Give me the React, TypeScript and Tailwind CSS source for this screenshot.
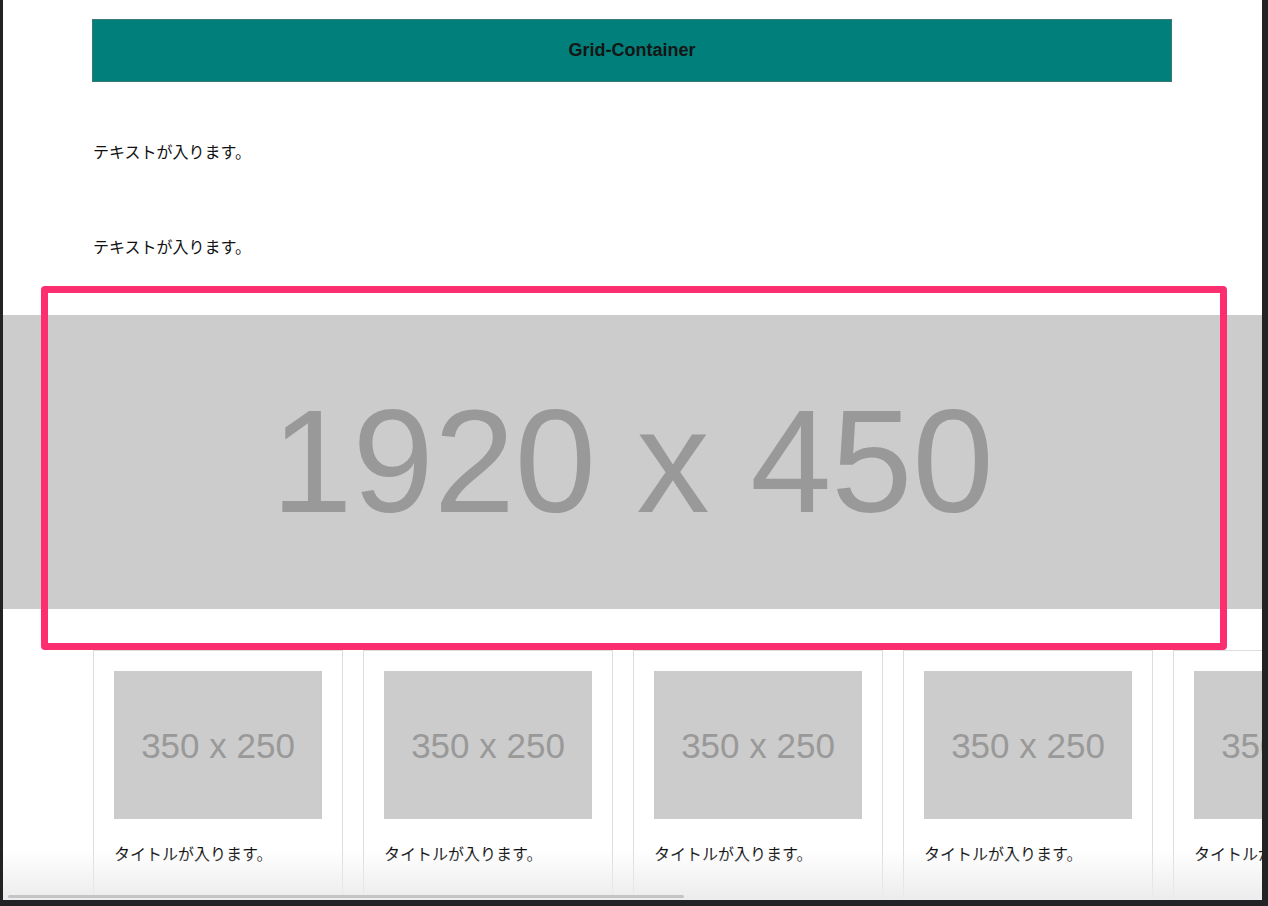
import React from "react";

const jp = { fontFamily: '"Noto Sans CJK JP", "Noto Sans", sans-serif' };
const arial = { fontFamily: '"Liberation Sans", Arial, sans-serif' };

const cards = [1, 2, 3, 4, 5];

export default function App() {
  return (
    <div className="w-full h-[906px] bg-[#232325] pl-[3px] pr-[6px] pb-[6px]">
      <div className="relative h-full bg-white overflow-hidden">
        {/* container */}
        <div className="w-[1080px] ml-[89px] pt-[19px]">
          <div
            className="h-[63px] bg-[#007f7b] border border-[#3d7878] flex items-center justify-center text-[18px] font-bold text-[#151515]"
            style={arial}
          >
            Grid-Container
          </div>
          <p className="mt-[57px] pl-px text-[16px] leading-6 text-[#111]" style={jp}>
            テキストが入ります。
          </p>
          <p className="mt-[71px] pl-px text-[16px] leading-6 text-[#111]" style={jp}>
            テキストが入ります。
          </p>
        </div>

        {/* hero banner */}
        <div className="mt-[57px] h-[294px] bg-[#cccccc] flex items-center justify-center">
          <span className="text-[146px] leading-none text-[#999999]" style={arial}>
            1920 x 450
          </span>
        </div>

        {/* card row */}
        <div className="w-[1080px] ml-[89px] mt-[41px] pl-px">
          <div className="flex gap-[20px]">
            {cards.map((c) => (
              <div key={c} className="w-[250px] h-[300px] shrink-0 border border-[#dddddd] p-[20px]">
                <div className="h-[148px] bg-[#cccccc] flex items-center justify-center">
                  <span className="text-[35px] leading-none text-[#999999]" style={arial}>
                    350 x 250
                  </span>
                </div>
                <p className="mt-[22px] text-[16px] leading-6 text-[#111] whitespace-nowrap" style={jp}>
                  タイトルが入ります。
                </p>
              </div>
            ))}
          </div>
        </div>

        {/* highlight frame */}
        <div className="absolute left-[38px] top-[286px] w-[1186px] h-[364px] border-[7px] border-[#fd2e6f] rounded-[4px]" />

        {/* bottom fade + scrollbar */}
        <div className="absolute left-0 right-0 bottom-0 h-[50px] bg-gradient-to-b from-white/0 to-[#ececec]" />
        <div className="absolute left-[5px] bottom-[2px] w-[676px] h-[3px] rounded-full bg-[#c4c4c4]" />
      </div>
    </div>
  );
}
